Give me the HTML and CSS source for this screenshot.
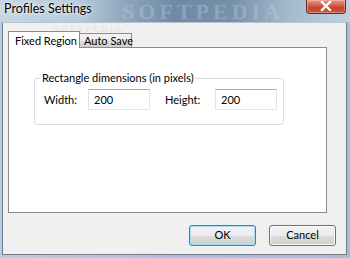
FILE: index.html
```html
<!DOCTYPE html>
<html>
<head>
<meta charset="utf-8">
<link rel="stylesheet" href="styles.css">
</head>
<body>
<div class="frame">
  <div class="titlebar">
    <span class="title">Profiles Settings</span>
    <div class="close">
      <svg width="12" height="10" viewBox="0 0 12 10"><path d="M2 1 L10 9 M10 1 L2 9" stroke="#fff" stroke-width="2.4" stroke-linecap="square"/></svg>
    </div>
  </div>
  <div class="client">
    <div class="tabs">
      <div class="tab active">Fixed Region</div>
      <div class="tab">Auto Save</div>
    </div>
    <div class="pane">
      <fieldset class="group">
        <legend>Rectangle dimensions (in pixels)</legend>
        <div class="row">
          <span class="lbl w">Width:</span>
          <span class="input">200</span>
          <span class="lbl h">Height:</span>
          <span class="input">200</span>
        </div>
      </fieldset>
    </div>
    <div class="buttons">
      <div class="btn default">OK</div>
      <div class="btn">Cancel</div>
    </div>
  </div>
  <div class="wm-big">SOFTPEDIA</div>
  <div class="wm-small">SOFTPEDIA<sup>™</sup></div>
  <div class="wm-url">www.softpedia.com</div>
</div>
</body>
</html>
```
FILE: styles.css
```css
* { box-sizing: border-box; }
html, body { margin: 0; padding: 0; }
body {
  width: 350px; height: 258px; overflow: hidden;
  font-family: Lato, "Open Sans", sans-serif;
  font-size: 11px; color: #000;
  white-space: nowrap;
}
.frame {
  position: relative;
  width: 350px; height: 258px;
  background: linear-gradient(90deg, #b3cde6 0%, #a6c4e2 50%, #9fbfdf 100%);
  padding: 0 3px 3px 2px;
  display: flex; flex-direction: column;
}
.titlebar {
  height: 22px; flex: none;
  margin: 0 -3px 0 -2px;
  padding-left: 4px;
  background: linear-gradient(90deg, #c6d6e4 0%, #b8cbdc 22%, #8ea6bd 36%, #6f8aa5 50%, #7690aa 66%, #a3b9cd 82%, #bfd1e1 100%);
  display: flex; align-items: flex-start; justify-content: space-between;
  position: relative;
}
.title {
  font-size: 12.5px; line-height: 14px; margin-top: 2px;
  color: #000; text-shadow: 0 0 6px rgba(255,255,255,0.9), 0 0 3px rgba(255,255,255,0.8);
}
.close {
  flex: none;
  width: 40px; height: 14px; margin-right: 4px;
  border: 1px solid #6e2a20; border-top: none;
  border-radius: 0 0 4px 4px;
  background: linear-gradient(180deg, #e39a8a 0%, #d46a55 35%, #c2432d 60%, #c95a3f 100%);
  box-shadow: inset 0 0 0 1px rgba(255,200,190,0.45);
  display: flex; align-items: center; justify-content: center;
}
.close svg { margin-top: -2px; }
.client {
  flex: 1;
  background: #f0f0f0;
  border: 1px solid #6f7b88;
  border-top-color: #b9c3cc;
  padding: 8px 0 0 5px;
  display: flex; flex-direction: column;
}
.tabs { display: flex; align-items: flex-end; height: 16px; position: relative; z-index: 2; }
.tab {
  flex: none;
  border: 1px solid #898c95; border-bottom: none;
  background: linear-gradient(180deg, #f2f2f2 0%, #ebebeb 50%, #dddddd 51%, #cfcfcf 100%);
  padding: 0 0 0 4px; height: 14px; line-height: 13px;
}
.tab.active {
  background: #fff; height: 17px; line-height: 17px; width: 72px;
  padding: 0 0 0 6px; margin-bottom: -1px;
}
.tab + .tab { border-left: none; width: 52px; }
.pane {
  flex: none;
  width: 319px; height: 166px;
  border: 1px solid #898c95;
  background: #fff;
  padding: 23px 0 0 25px;
  position: relative; z-index: 1;
}
.group {
  margin: 0; width: 250px; height: 54px;
  border: 1px solid #d5dfe5; border-radius: 3px;
  padding: 0 0 0 9px;
}
.group legend { padding: 0 1px; margin-left: -3px; line-height: 14px; }
.row { display: flex; align-items: center; margin-top: 4px; height: 20px; }
.row > * { flex: none; }
.lbl.w { width: 44px; }
.lbl.h { width: 50px; margin-left: 15px; }
.input {
  width: 62px; height: 21px;
  border: 1px solid #e2e3ea; border-top-color: #abadb3;
  padding: 3px 0 0 5px; line-height: 14px;
  background: #fff;
}
.buttons {
  display: flex; gap: 13px; margin: 12px 0 0 181px;
}
.btn {
  flex: none;
  width: 67px; height: 21px;
  border: 1px solid #707070; border-radius: 3px;
  background: linear-gradient(180deg, #f2f2f2 0%, #ebebeb 50%, #dddddd 51%, #cfcfcf 100%);
  box-shadow: inset 0 0 0 1px #fcfcfc;
  text-align: center; line-height: 18px;
}
.btn.default {
  border-color: #3c7fb1;
  box-shadow: inset 0 0 0 1px #a8e0f5;
}
.wm-big {
  position: absolute; left: 122px; top: 0px;
  font-family: "Liberation Serif", serif; font-size: 22px; line-height: 24px; font-weight: bold;
  letter-spacing: 4px; color: rgba(205,215,228,0.32);
  pointer-events: none;
}
.wm-small {
  position: absolute; left: 54px; top: 23px;
  font-family: "Liberation Serif", serif; font-size: 8px; line-height: 8px; letter-spacing: 3px;
  color: rgba(205,205,205,0.45);
}
.wm-small sup { font-size: 5px; }
.wm-url {
  position: absolute; left: 70px; top: 50px;
  font-size: 9.5px; line-height: 10px; color: rgba(190,190,190,0.5);
}
```
